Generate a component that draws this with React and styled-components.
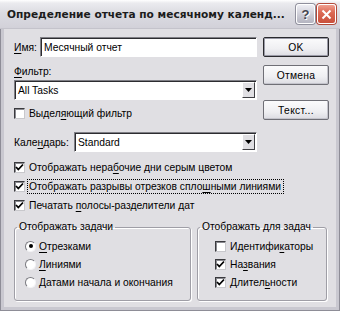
import React from "react";
import styled, { createGlobalStyle } from "styled-components";

const GlobalStyle = createGlobalStyle`
  html, body {
    margin: 0;
    padding: 0;
    background: #ffffff;
  }
  body {
    font-family: "Liberation Sans", "DejaVu Sans", sans-serif;
    font-size: 10.3px;
    color: #000;
  }
`;

const Window = styled.div`
  width: 340px;
  height: 311px;
  display: flex;
  flex-direction: column;
  box-sizing: border-box;
  overflow: hidden;
`;

const TitleBar = styled.div`
  height: 29px;
  flex: none;
  display: flex;
  align-items: center;
  padding: 0 4px 0 7px;
  box-sizing: border-box;
  background: linear-gradient(
    to bottom,
    #ffffff 0px,
    #ebebef 3px,
    #dcdce2 45%,
    #d2d1d9 100%
  );
  border-bottom: 1px solid #c4c3cb;
`;

const Title = styled.div`
  flex: 1;
  font-family: "DejaVu Sans", sans-serif;
  font-weight: bold;
  font-size: 10.6px;
  color: #1c1c1c;
  white-space: nowrap;
  overflow: hidden;
`;

const CaptionButton = styled.div`
  width: 19px;
  height: 20px;
  margin-left: 2px;
  border-radius: 3px;
  border: 1px solid #ffffff;
  box-sizing: border-box;
  display: flex;
  align-items: center;
  justify-content: center;
  background: ${({ $close }) =>
    $close
      ? "linear-gradient(to bottom, #f0a090 0%, #dc6a55 40%, #c9503c 100%)"
      : "linear-gradient(to bottom, #eeeef4 0%, #cfcfd8 50%, #b4b4c0 100%)"};
  box-shadow: 0 0 0 1px ${({ $close }) => ($close ? "#b24a3a" : "#8f8f9c")};
  color: #45454f;
  font-weight: bold;
  font-size: 13px;
  text-shadow: 1px 1px 0 #ffffff;
`;

const Frame = styled.div`
  flex: 1;
  display: flex;
  background: #c9c8d0;
  border: 1px solid #8e8d97;
  border-top: none;
  padding: 0 3px 3px;
`;

const Body = styled.div`
  flex: 1;
  background: #e0dfe3;
  padding: 8px 7px 0 10px;
  display: flex;
  flex-direction: column;
`;

const TopGrid = styled.div`
  display: grid;
  grid-template-columns: 243px 66px;
  column-gap: 6px;
`;

const FormColumn = styled.div`
  display: flex;
  flex-direction: column;
`;

const ButtonColumn = styled.div`
  display: flex;
  flex-direction: column;
`;

const FieldRow = styled.div`
  display: flex;
  align-items: center;
  margin-top: ${({ $top }) => $top || 0}px;
`;

const Label = styled.span`
  width: ${({ $w }) => ($w ? `${$w}px` : "auto")};
  flex: none;
  white-space: nowrap;
`;

const BlockLabel = styled.div`
  margin-top: 7px;
  height: 16px;
  line-height: 15px;
`;

const Sunken = styled.div`
  flex: 1;
  height: ${({ $h }) => $h || 20}px;
  box-sizing: border-box;
  background: #ffffff;
  border-style: solid;
  border-width: 1px;
  border-color: #7f7f85 #ffffff #ffffff #7f7f85;
  box-shadow: inset 1px 1px 0 #2c2c30;
  display: flex;
  align-items: center;
  padding-left: 3px;
  white-space: nowrap;
`;

const SelectText = styled.span`
  flex: 1;
`;

const ArrowButton = styled.div`
  width: 13px;
  height: 16px;
  margin: 1px 1px 1px 0;
  box-sizing: border-box;
  background: #e0dfe3;
  border-style: solid;
  border-width: 1px;
  border-color: #ffffff #404044 #404044 #ffffff;
  display: flex;
  align-items: center;
  justify-content: center;
`;

const Button = styled.div`
  height: 20px;
  margin-top: ${({ $top }) => $top || 0}px;
  box-sizing: border-box;
  border: 1px solid ${({ $default }) => ($default ? "#2a2a2e" : "#6f6f76")};
  border-radius: 2px;
  background: linear-gradient(to bottom, #fbfbfc 0%, #efeff2 60%, #dcdce2 100%);
  box-shadow: ${({ $default }) =>
    $default ? "inset 0 0 0 1px #9a9aa6" : "inset -1px -1px 0 #c4c4cc"};
  display: flex;
  align-items: center;
  justify-content: center;
  letter-spacing: 0.3px;
`;

const CheckRow = styled.div`
  display: flex;
  align-items: center;
  height: ${({ $h }) => $h || 19}px;
  margin-top: ${({ $top }) => $top || 0}px;
  white-space: nowrap;
`;

const Box = styled.span`
  width: 11px;
  height: 11px;
  flex: none;
  box-sizing: border-box;
  background: #ffffff;
  border-style: solid;
  border-width: 1px;
  border-color: #3a3a3e #c8c8cc #c8c8cc #3a3a3e;
  box-shadow: inset 1px 1px 0 #8a8a90;
  display: flex;
  align-items: center;
  justify-content: center;
  margin-right: 4px;
`;

const Radio = styled.span`
  width: 11px;
  height: 11px;
  flex: none;
  box-sizing: border-box;
  border-radius: 50%;
  background: #ffffff;
  border-style: solid;
  border-width: 1px;
  border-color: #7a7a80 #f4f4f6 #f4f4f6 #7a7a80;
  display: flex;
  align-items: center;
  justify-content: center;
  margin-right: 3px;

  &::after {
    content: "";
    width: 4px;
    height: 4px;
    border-radius: 50%;
    background: ${({ $on }) => ($on ? "#000" : "transparent")};
  }
`;

const Focus = styled.span`
  outline: 1px dotted #000;
  outline-offset: 1px;
  padding-right: 1px;
`;

const Groups = styled.div`
  display: grid;
  grid-template-columns: 177px 130px;
  column-gap: 6px;
  margin-top: 6px;
`;

const Group = styled.fieldset`
  margin: 0;
  height: 80px;
  box-sizing: border-box;
  border: 1px solid #9f9ea6;
  border-radius: 3px;
  box-shadow: 1px 1px 0 #ffffff, inset 1px 1px 0 #ffffff;
  padding: 4px 2px 0;
`;

const Legend = styled.legend`
  padding: 0 2px;
  margin: 0;
  line-height: 12px;
  white-space: nowrap;
`;

const GroupContent = styled.div`
  padding-left: ${({ $indent }) => $indent}px;
`;

const U = styled.u`
  text-decoration-thickness: 1px;
  text-underline-offset: 2px;
`;

const Check = () => (
  <svg width="9" height="9" viewBox="0 0 9 9">
    <path d="M1 4 L3.3 6.5 L8 1.5" fill="none" stroke="#000" strokeWidth="1.8" />
  </svg>
);

function CheckItem({ on, children, h, top }) {
  return (
    <CheckRow $h={h} $top={top}>
      <Box>{on && <Check />}</Box>
      <span>{children}</span>
    </CheckRow>
  );
}

function RadioItem({ on, children }) {
  return (
    <CheckRow $h={18}>
      <Radio $on={on} />
      <span>{children}</span>
    </CheckRow>
  );
}

function Select({ value }) {
  return (
    <Sunken $h={20}>
      <SelectText>{value}</SelectText>
      <ArrowButton>
        <svg width="7" height="4" viewBox="0 0 7 4">
          <path d="M0 0 H7 L3.5 4 Z" fill="#000" />
        </svg>
      </ArrowButton>
    </Sunken>
  );
}

export default function App() {
  return (
    <>
      <GlobalStyle />
      <Window>
        <TitleBar>
          <Title>Определение отчета по месячному календ...</Title>
          <CaptionButton>?</CaptionButton>
          <CaptionButton $close>
            <svg width="11" height="11" viewBox="0 0 11 11">
              <path d="M1.5 1.5 L9.5 9.5 M9.5 1.5 L1.5 9.5" stroke="#fff" strokeWidth="2" />
            </svg>
          </CaptionButton>
        </TitleBar>
        <Frame>
          <Body>
            <TopGrid>
              <FormColumn>
                <FieldRow>
                  <Label $w={26}>
                    <U>И</U>мя:
                  </Label>
                  <Sunken $h={20}>Месячный отчет</Sunken>
                </FieldRow>
                <BlockLabel>
                  <U>Ф</U>ильтр:
                </BlockLabel>
                <Select value="All Tasks" />
                <CheckItem top={4} h={18}>
                  Выдел<U>я</U>ющий фильтр
                </CheckItem>
                <FieldRow $top={10}>
                  <Label $w={60}>
                    Кале<U>н</U>дарь:
                  </Label>
                  <Select value="Standard" />
                </FieldRow>
              </FormColumn>
              <ButtonColumn>
                <Button $default>OK</Button>
                <Button $top={8}>Отмена</Button>
                <Button $top={15}>Текст...</Button>
              </ButtonColumn>
            </TopGrid>

            <CheckItem on top={6}>
              Отображать нера<U>б</U>очие дни серым цветом
            </CheckItem>
            <CheckItem on>
              <Focus>
                Отображать разрывы отрезков спло<U>ш</U>ными линиями
              </Focus>
            </CheckItem>
            <CheckItem on>
              Печатать <U>п</U>олосы-разделители дат
            </CheckItem>

            <Groups>
              <Group>
                <Legend>Отображать задачи</Legend>
                <GroupContent $indent={8}>
                  <RadioItem on>
                    <U>О</U>трезками
                  </RadioItem>
                  <RadioItem>
                    <U>Л</U>иниями
                  </RadioItem>
                  <RadioItem>
                    <U>Д</U>атами начала и окончания
                  </RadioItem>
                </GroupContent>
              </Group>
              <Group>
                <Legend>Отображать для задач</Legend>
                <GroupContent $indent={15}>
                  <CheckItem h={18}>
                    Идентифи<U>к</U>аторы
                  </CheckItem>
                  <CheckItem on h={18}>
                    На<U>з</U>вания
                  </CheckItem>
                  <CheckItem on h={18}>
                    Длител<U>ь</U>ности
                  </CheckItem>
                </GroupContent>
              </Group>
            </Groups>
          </Body>
        </Frame>
      </Window>
    </>
  );
}
